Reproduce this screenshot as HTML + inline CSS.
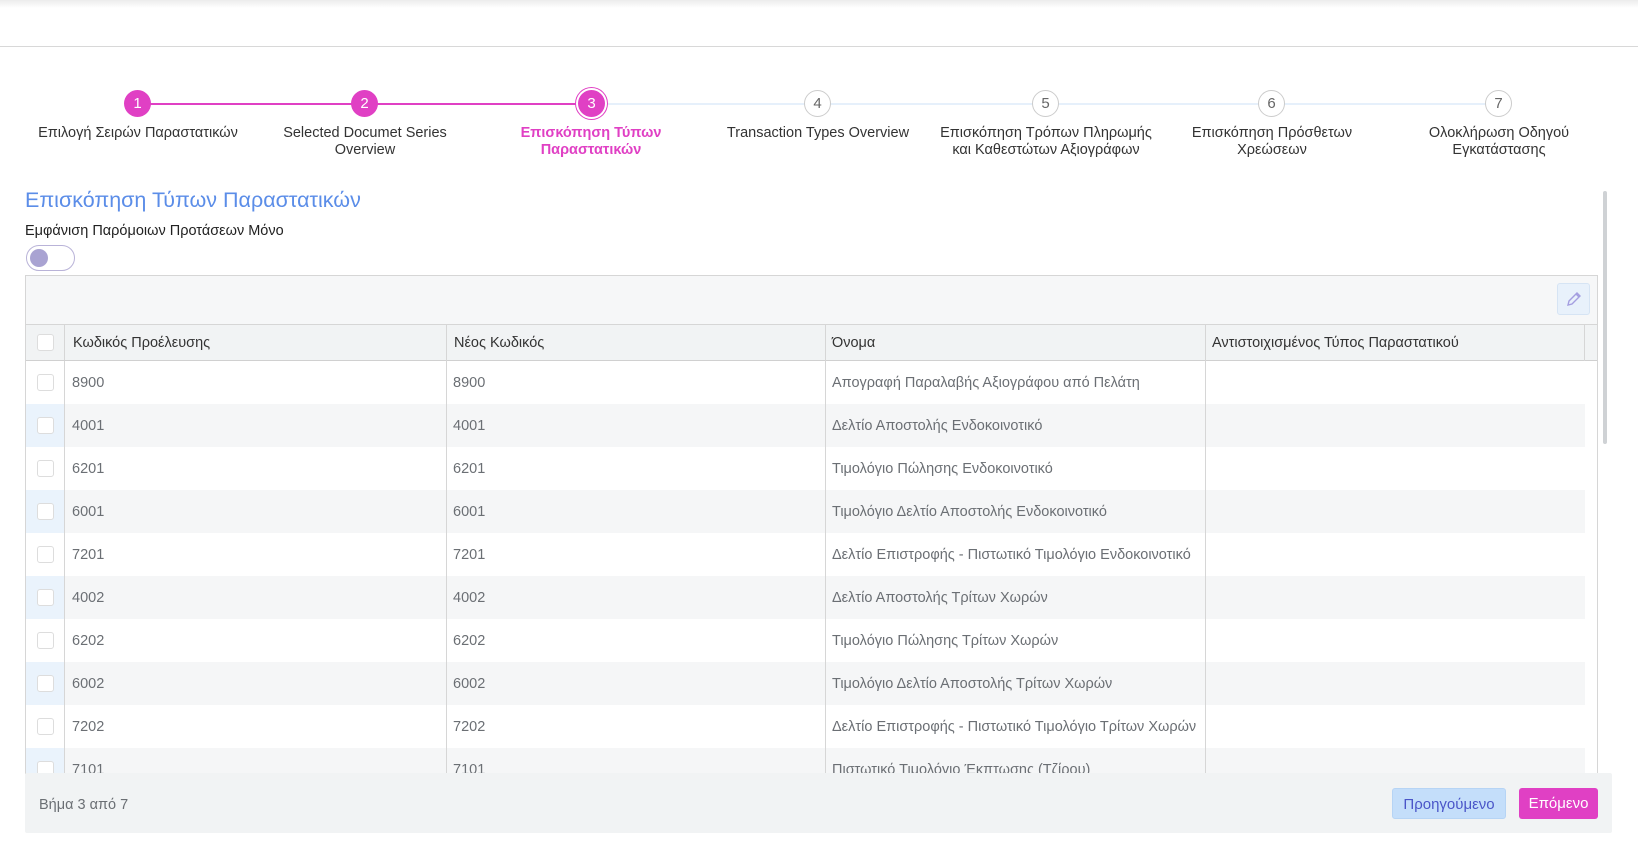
<!DOCTYPE html>
<html><head><meta charset="utf-8"><style>
*{box-sizing:border-box;margin:0;padding:0}
body{width:1638px;height:854px;overflow:hidden;background:#fff;font-family:"Liberation Sans","DejaVu Sans",sans-serif;color:#333;position:relative}
.top{position:absolute;left:0;top:0;width:1638px;height:47px;border-bottom:1px solid #d8d8d8;background:linear-gradient(#ececec 0,#fff 8px)}
.line{position:absolute;top:103px;height:2px}
.c{position:absolute;top:90px;width:27px;height:27px;border-radius:50%;text-align:center;line-height:27px;font-size:15px}
.c.d{background:#e040c4;color:#fff}
.c.o{background:#fff;border:1px solid #ccc;color:#666;line-height:25px}
.c.a{background:#e040c4;color:#fff;box-shadow:0 0 0 2px #fff,0 0 0 3px #e040c4}
.l{position:absolute;top:125px;width:220px;text-align:center;font-size:14.5px;line-height:17px;color:#333}
.l.a{color:#e040c4;font-weight:bold}
.title{position:absolute;left:25px;top:188px;font-size:21.5px;color:#5b8de8}
.sub{position:absolute;left:25px;top:223px;font-size:14.5px;color:#222}
.tog{position:absolute;left:26px;top:245px;width:49px;height:26px;border:1px solid #b9b3d8;border-radius:13px}
.tog:after{content:"";position:absolute;left:3px;top:3px;width:18px;height:18px;border-radius:50%;background:#a9a3d2}
.tbl{position:absolute;left:25px;top:275px;width:1573px;height:499px;border:1px solid #d6d6d6;border-bottom:none;overflow:hidden}
.tb{height:49px;background:#f6f7f8;border-bottom:1px solid #d6d6d6;position:relative}
.edit{position:absolute;left:1531px;top:7px;width:33px;height:32px;border:1px solid #d6e4f4;background:#e8f1fb;border-radius:3px}
.hd{height:36px;background:#f1f3f4;border-bottom:1px solid #d0d0d0;position:relative;font-size:14.5px;color:#333}
.row{height:43px;position:relative;font-size:14.5px;color:#6b6f74}
.row.s{background:#f5f6f7;width:1559px}
.row.s .cb{background:#eaf3fc}
.cb{position:absolute;left:0;top:0;width:39px;height:100%;border-right:1px solid #d6d6d6}
.cb i{position:absolute;left:11px;top:50%;margin-top:-9px;width:17px;height:17px;border:1px solid #ddd;border-radius:3px;background:#fff}
.t{position:absolute;top:50%;transform:translateY(-50%);white-space:nowrap}
.vl{position:absolute;top:324px;height:450px;width:1px;background:#d6d6d6}
.foot{position:absolute;left:25px;top:773px;width:1587px;height:60px;background:#f1f3f4;border-radius:2px}
.foot span{position:absolute;left:14px;top:24px;font-size:14.5px;color:#6b6f74}
.btn{position:absolute;top:15px;height:31px;border-radius:3px;font-size:15px;text-align:center;line-height:31px}
.sb{position:absolute;left:1603px;top:191px;width:4px;height:253px;background:#cfd2d5;border-radius:2px}
</style></head><body>
<div class="top"></div>
<div class="line" style="left:138px;width:453px;background:#e040c4"></div>
<div class="line" style="left:591px;width:908px;background:#e6f0fb"></div>
<div class="c d" style="left:124px">1</div>
<div class="c d" style="left:351px">2</div>
<div class="c a" style="left:578px">3</div>
<div class="c o" style="left:804px">4</div>
<div class="c o" style="left:1032px">5</div>
<div class="c o" style="left:1258px">6</div>
<div class="c o" style="left:1485px">7</div>
<div class="l" style="left:28px">Επιλογή Σειρών Παραστατικών</div>
<div class="l" style="left:255px">Selected Documet Series<br>Overview</div>
<div class="l a" style="left:481px">Επισκόπηση Τύπων<br>Παραστατικών</div>
<div class="l" style="left:708px">Transaction Types Overview</div>
<div class="l" style="left:926px;width:240px">Επισκόπηση Τρόπων Πληρωμής<br>και Καθεστώτων Αξιογράφων</div>
<div class="l" style="left:1162px">Επισκόπηση Πρόσθετων<br>Χρεώσεων</div>
<div class="l" style="left:1389px">Ολοκλήρωση Οδηγού<br>Εγκατάστασης</div>
<div class="title">Επισκόπηση Τύπων Παραστατικών</div>
<div class="sub">Εμφάνιση Παρόμοιων Προτάσεων Μόνο</div>
<div class="tog"></div>
<div class="tbl">
<div class="tb"><div class="edit"><svg width="31" height="30" viewBox="0 0 31 30"><path d="M10 21l1-4 8-8 3 3-8 8z M18 10l3 3" fill="none" stroke="#a49ee0" stroke-width="1.4"/></svg></div></div>
<div class="hd"><div class="cb"><i></i></div>
<span class="t" style="left:47px">Κωδικός Προέλευσης</span><span class="t" style="left:428px">Νέος Κωδικός</span><span class="t" style="left:806px">Όνομα</span><span class="t" style="left:1186px">Αντιστοιχισμένος Τύπος Παραστατικού</span>
<div style="position:absolute;left:1558px;top:0;width:1px;height:36px;background:#d6d6d6"></div></div>
<div class="row"><div class="cb"><i></i></div><span class="t" style="left:46px">8900</span><span class="t" style="left:427px">8900</span><span class="t" style="left:806px">Απογραφή Παραλαβής Αξιογράφου από Πελάτη</span></div>
<div class="row s"><div class="cb"><i></i></div><span class="t" style="left:46px">4001</span><span class="t" style="left:427px">4001</span><span class="t" style="left:806px">Δελτίο Αποστολής Ενδοκοινοτικό</span></div>
<div class="row"><div class="cb"><i></i></div><span class="t" style="left:46px">6201</span><span class="t" style="left:427px">6201</span><span class="t" style="left:806px">Τιμολόγιο Πώλησης Ενδοκοινοτικό</span></div>
<div class="row s"><div class="cb"><i></i></div><span class="t" style="left:46px">6001</span><span class="t" style="left:427px">6001</span><span class="t" style="left:806px">Τιμολόγιο Δελτίο Αποστολής Ενδοκοινοτικό</span></div>
<div class="row"><div class="cb"><i></i></div><span class="t" style="left:46px">7201</span><span class="t" style="left:427px">7201</span><span class="t" style="left:806px;width:373px;overflow:hidden">Δελτίο Επιστροφής - Πιστωτικό Τιμολόγιο Ενδοκοινοτικό</span></div>
<div class="row s"><div class="cb"><i></i></div><span class="t" style="left:46px">4002</span><span class="t" style="left:427px">4002</span><span class="t" style="left:806px">Δελτίο Αποστολής Τρίτων Χωρών</span></div>
<div class="row"><div class="cb"><i></i></div><span class="t" style="left:46px">6202</span><span class="t" style="left:427px">6202</span><span class="t" style="left:806px">Τιμολόγιο Πώλησης Τρίτων Χωρών</span></div>
<div class="row s"><div class="cb"><i></i></div><span class="t" style="left:46px">6002</span><span class="t" style="left:427px">6002</span><span class="t" style="left:806px">Τιμολόγιο Δελτίο Αποστολής Τρίτων Χωρών</span></div>
<div class="row"><div class="cb"><i></i></div><span class="t" style="left:46px">7202</span><span class="t" style="left:427px">7202</span><span class="t" style="left:806px;width:373px;overflow:hidden">Δελτίο Επιστροφής - Πιστωτικό Τιμολόγιο Τρίτων Χωρών</span></div>
<div class="row s"><div class="cb"><i></i></div><span class="t" style="left:46px">7101</span><span class="t" style="left:427px">7101</span><span class="t" style="left:806px">Πιστωτικό Τιμολόγιο Έκπτωσης (Τζίρου)</span></div>
</div>
<div class="vl" style="left:446px"></div><div class="vl" style="left:825px"></div><div class="vl" style="left:1205px"></div>
<div class="foot"><span>Βήμα 3 από 7</span>
<div class="btn" style="left:1367px;width:114px;background:#c4defa;color:#4a55c8;border:1px solid #b6d4f5">Προηγούμενο</div>
<div class="btn" style="left:1494px;width:79px;background:#e040c4;color:#fff">Επόμενο</div></div>
<div class="sb"></div>
</body></html>
